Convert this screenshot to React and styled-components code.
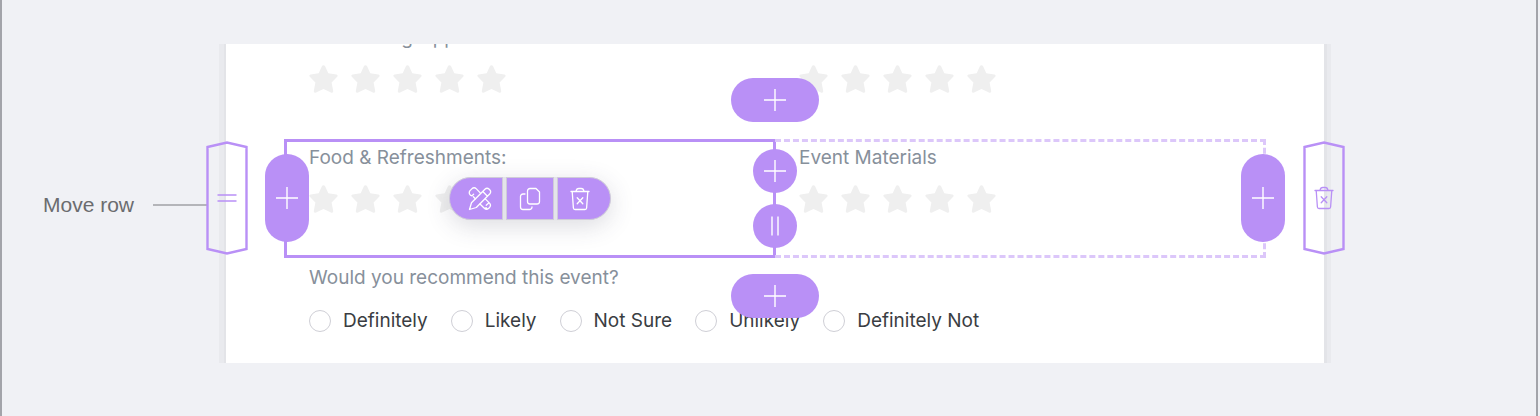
import React from "react";
import styled, { createGlobalStyle } from "styled-components";

const STARS = [1, 2, 3, 4, 5];
const CHOICES = ["Definitely", "Likely", "Not Sure", "Unlikely", "Definitely Not"];

const PlusIcon = () => (
  <svg width="22" height="22" viewBox="0 0 22 22" fill="none" stroke="currentColor" strokeWidth="1.4">
    <path d="M11 0v22M0 11h22" />
  </svg>
);

const BarsIcon = ({ vertical }) => (
  <svg width="20" height="20" viewBox="0 0 20 20" fill="none" stroke="currentColor" strokeWidth="1.4">
    <path d={vertical ? "M7 0.5v19M13 0.5v19" : "M0.5 7h19M0.5 13h19"} />
  </svg>
);

const TrashIcon = () => (
  <svg
    width="20"
    height="24"
    viewBox="0 0 20 24"
    fill="none"
    stroke="currentColor"
    strokeWidth="1.3"
    strokeLinecap="round"
    strokeLinejoin="round"
  >
    <path d="M1 4.5h18M2.200 4.500l1.200 16.500a1.600 1.600 0 0 0 1.600 1.500h10a1.600 1.600 0 0 0 1.600-1.500l1.200-16.500M6 4.300c.3-1.800 1.300-2.800 2.800-2.800h2.400c1.500 0 2.500 1 2.800 2.800M7.200 10.800l5.600 6M12.800 10.800l-5.600 6" />
  </svg>
);

const CopyIcon = () => (
  <svg
    width="22"
    height="24"
    viewBox="0 0 22 24"
    fill="none"
    stroke="currentColor"
    strokeWidth="1.3"
    strokeLinecap="round"
    strokeLinejoin="round"
  >
    <path d="M11 1.500h6l3.500 3.500v9.500a2.500 2.500 0 0 1-2.500 2.500h-7a2.500 2.500 0 0 1-2.500-2.500v-10.500a2.500 2.500 0 0 1 2.500-2.500z" />
    <path d="M6 7h-2a2.500 2.500 0 0 0-2.500 2.500v10.500a2.500 2.500 0 0 0 2.500 2.500h6.500a2.500 2.500 0 0 0 2.500-2.500" />
  </svg>
);

const DesignIcon = () => (
  <svg
    width="24"
    height="24"
    viewBox="0 0 24 24"
    fill="none"
    stroke="currentColor"
    strokeWidth="1.3"
    strokeLinecap="round"
    strokeLinejoin="round"
  >
    <path d="M1.500 22.500l2-6.800L17.200 2a2.600 2.600 0 0 1 3.700 0l1 1a2.600 2.600 0 0 1 0 3.700L8.300 20.500zM14.800 4.500l4.700 4.700" />
    <path d="M7.300 11.800L5.400 9.800M5.600 7.200l-1.700 1.700a3.300 3.300 0 0 1-2.100-5l2-2a3.300 3.300 0 0 1 4.600 0l3.800 4" />
    <path d="M12 17l4.300 4.300a3.300 3.300 0 0 0 4.400 0l.8-.8a3.300 3.300 0 0 0 0-4.400l-4-4M21 15.800l-2.800 2.400M16.300 21.200l2.200-.2" />
  </svg>
);

const StarIcon = () => (
  <svg width="29" height="28" viewBox="0 0 29 28" fill="currentColor">
    <path d="M12.900 1.200a1.800 1.800 0 0 1 3.200 0L19.300 8.200l8 1.200a1.400 1.400 0 0 1 .9 2.400l-5.600 5.700 1.600 8.400a1.500 1.500 0 0 1-2.200 1.600L14.500 24l-7.500 3.500a1.500 1.500 0 0 1-2.200-1.600l1.600-8.400L.8 11.800a1.400 1.400 0 0 1 .9-2.400l8-1.200z" />
  </svg>
);

const Rating = ({ title, name }) => (
  <Stars role="group" aria-label={title || name}>
    {STARS.map((n) => (
      <StarButton key={n} type="button" aria-label={`${n} of 5`}>
        <StarIcon />
      </StarButton>
    ))}
  </Stars>
);

const Field = ({ title, name, variant }) => (
  <Cell $variant={variant}>
    <Title>{title}</Title>
    <Rating title={title} name={name} />
  </Cell>
);

const RowHandle = ({ side, label, children }) => (
  <Handle type="button" $side={side} aria-label={label}>
    <HandleShape viewBox="0 0 42 114" fill="none" stroke="#b990f6" strokeWidth="2.4">
      <path d="M1.500 6L21 1.600 40.500 6v102L21 112.400 1.500 108z" />
    </HandleShape>
    {children}
  </Handle>
);

const App = () => {
  return (
    <Page>
      <GlobalStyle />
      <Callout>
        <span>Move row</span>
        <Leader />
      </Callout>
      <Sheet>
        <Row>
          <Field title="Networking Opportunities:" />
          <Field name="Second rating" />
        </Row>
        <Row>
          <Field title="Food & Refreshments:" variant="selected" />
          <Field title="Event Materials" variant="sibling" />
          <AddButton type="button" $place="top" aria-label="Add row above">
            <PlusIcon />
          </AddButton>
          <AddButton type="button" $place="left" aria-label="Add field left">
            <PlusIcon />
          </AddButton>
          <AddButton type="button" $place="right" aria-label="Add field right">
            <PlusIcon />
          </AddButton>
          <AddButton type="button" $place="bottom" aria-label="Add row below">
            <PlusIcon />
          </AddButton>
          <Divider>
            <RoundButton type="button" aria-label="Add field between">
              <PlusIcon />
            </RoundButton>
            <RoundButton type="button" aria-label="Resize columns">
              <BarsIcon vertical />
            </RoundButton>
          </Divider>
          <Toolbar>
            <ToolButton type="button" aria-label="Design">
              <DesignIcon />
            </ToolButton>
            <ToolButton type="button" aria-label="Duplicate">
              <CopyIcon />
            </ToolButton>
            <ToolButton type="button" aria-label="Delete">
              <TrashIcon />
            </ToolButton>
          </Toolbar>
          <RowHandle side="left" label="Move row">
            <BarsIcon />
          </RowHandle>
          <RowHandle side="right" label="Delete row">
            <TrashIcon />
          </RowHandle>
        </Row>
        <Question>
          <Legend>Would you recommend this event?</Legend>
          <Choices>
            {CHOICES.map((choice) => (
              <Choice key={choice}>
                <Radio type="radio" name="recommend" />
                {choice}
              </Choice>
            ))}
          </Choices>
        </Question>
      </Sheet>
    </Page>
  );
};

export default App;

const GlobalStyle = createGlobalStyle`
  * {
    box-sizing: border-box;
  }
  body {
    margin: 0;
    background-color: #f0f1f5;
  }
  button {
    padding: 0;
    border: none;
    background: none;
    cursor: pointer;
  }
  svg {
    display: block;
  }
`;

const Page = styled.main`
  display: grid;
  grid-template-columns: 224px minmax(0, 1fr) 212px;
  min-height: 100vh;
  margin-right: 2px;
  padding: 44px 0 53px;
  border-left: 2px solid #a3a4aa;
  border-right: 2px solid #a3a4aa;

  font-family: Inter, "Liberation Sans", sans-serif;
  font-size: 19px;
  line-height: 24px;
`;

const Callout = styled.div`
  display: flex;
  align-items: center;
  gap: 19px;
  height: 24px;
  margin-top: 149px;
  padding: 0 18px 0 41px;

  color: #6b6c6f;
  font-family: "Liberation Sans", Arial, sans-serif;
  font-size: 21px;
  white-space: nowrap;
`;

const Leader = styled.span`
  flex: 1;
  height: 2px;
  background-color: #b4b5b9;
`;

const Sheet = styled.form`
  display: flex;
  flex-direction: column;
  gap: 1px;
  align-self: start;
  padding: 0 58px 30px;
  overflow-y: clip;

  background-color: white;
  box-shadow: -2px 0 #e3e4e8, 3px 0 #e3e4e8, -7px 0 #e9eaee, 7px 0 #e9eaee;
`;

const Row = styled.div`
  position: relative;
  display: grid;
  grid-template-columns: 1fr 1fr;

  &:first-child {
    margin-top: -25px;
  }
`;

const borders = {
  selected: "3px solid #b990f6",
  sibling: "3px dashed #dcc7fa",
};

const Cell = styled.div`
  height: 119px;
  padding: 4px 22px;
  border: ${({ $variant }) => borders[$variant] || "3px solid transparent"};

  &:nth-child(1) {
    margin-right: -1px;
  }
  &:nth-child(2) {
    border-left: none;
    padding-left: 24px;
  }
`;

const Title = styled.div`
  min-height: 24px;
  color: #87909b;
`;

const Stars = styled.div`
  display: flex;
  gap: 13px;
  margin-top: 15px;
`;

const StarButton = styled.button`
  color: #efefef;
`;

const PurpleButton = styled.button`
  display: flex;
  align-items: center;
  justify-content: center;

  background-color: #b990f6;
  color: white;
`;

const places = {
  top: "top: -61px; left: 50%; transform: translateX(-50%);",
  bottom: "bottom: -60px; left: 50%; transform: translateX(-50%);",
  left: "top: 15px; left: -19px;",
  right: "top: 15px; right: -19px;",
};

const isUpright = ($place) => $place === "left" || $place === "right";

const AddButton = styled(PurpleButton)`
  position: absolute;
  width: ${({ $place }) => (isUpright($place) ? 44 : 88)}px;
  height: ${({ $place }) => (isUpright($place) ? 88 : 44)}px;
  border-radius: 22px;
  ${({ $place }) => places[$place]}
`;

const Divider = styled.div`
  position: absolute;
  top: 10px;
  left: 50%;
  transform: translateX(-50%);
  display: grid;
  gap: 11px;
`;

const RoundButton = styled(PurpleButton)`
  width: 44px;
  height: 44px;
  border-radius: 50%;
`;

const Toolbar = styled.div`
  position: absolute;
  top: 38px;
  left: 25%;
  transform: translateX(-50%);
  display: flex;
  gap: 3px;
  border-radius: 22px;
  background-color: #e4e4ea;
  box-shadow: 0 6px 24px rgba(60, 60, 90, 0.18);
`;

const ToolButton = styled(PurpleButton)`
  width: 48px;
  height: 43px;
  border: 1px solid #cfcbd9;

  &:first-child {
    width: 54px;
    padding-left: 8px;
    border-radius: 22px 0 0 22px;
  }
  &:last-child {
    width: 54px;
    padding-right: 8px;
    border-radius: 0 22px 22px 0;
  }
`;

const Handle = styled.button`
  position: absolute;
  top: 2px;
  ${({ $side }) => $side}: ${({ $side }) => ($side === "left" ? -78 : -79)}px;
  display: grid;
  place-items: center;
  width: 42px;
  height: 114px;
  color: #b990f6;
`;

const HandleShape = styled.svg`
  position: absolute;
  inset: 0;
`;

const Question = styled.fieldset`
  min-width: 0;
  margin: 0;
  padding: 7px 25px 0;
  border: none;
`;

const Legend = styled.legend`
  float: left;
  width: 100%;
  padding: 0;
  color: #87909b;
`;

const Choices = styled.div`
  clear: both;
  display: flex;
  gap: 23px;
  padding-top: 19px;
`;

const Choice = styled.label`
  display: flex;
  align-items: center;
  gap: 12px;
  color: #3a3d42;
  white-space: nowrap;
`;

const Radio = styled.input`
  appearance: none;
  width: 22px;
  height: 22px;
  margin: 0;
  border: 1px solid #cfcfd6;
  border-radius: 50%;
  background-color: white;

  &:checked {
    border: 6px solid #b990f6;
  }
`;
